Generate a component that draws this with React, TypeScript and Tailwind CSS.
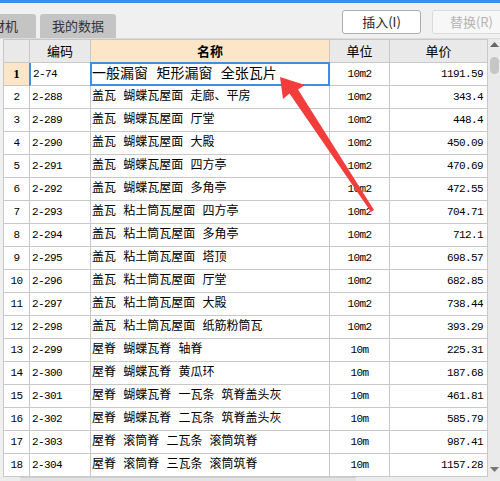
import React from "react";

const rows: [string, string, string, string][] = [
  ["2-74", "一般漏窗 矩形漏窗 全张瓦片", "10m2", "1191.59"],
  ["2-288", "盖瓦 蝴蝶瓦屋面 走廊、平房", "10m2", "343.4"],
  ["2-289", "盖瓦 蝴蝶瓦屋面 厅堂", "10m2", "448.4"],
  ["2-290", "盖瓦 蝴蝶瓦屋面 大殿", "10m2", "450.09"],
  ["2-291", "盖瓦 蝴蝶瓦屋面 四方亭", "10m2", "470.69"],
  ["2-292", "盖瓦 蝴蝶瓦屋面 多角亭", "10m2", "472.55"],
  ["2-293", "盖瓦 粘土筒瓦屋面 四方亭", "10m2", "704.71"],
  ["2-294", "盖瓦 粘土筒瓦屋面 多角亭", "10m2", "712.1"],
  ["2-295", "盖瓦 粘土筒瓦屋面 塔顶", "10m2", "698.57"],
  ["2-296", "盖瓦 粘土筒瓦屋面 厅堂", "10m2", "682.85"],
  ["2-297", "盖瓦 粘土筒瓦屋面 大殿", "10m2", "738.44"],
  ["2-298", "盖瓦 粘土筒瓦屋面 纸筋粉筒瓦", "10m2", "393.29"],
  ["2-299", "屋脊 蝴蝶瓦脊 轴脊", "10m", "225.31"],
  ["2-300", "屋脊 蝴蝶瓦脊 黄瓜环", "10m", "187.68"],
  ["2-301", "屋脊 蝴蝶瓦脊 一瓦条 筑脊盖头灰", "10m", "461.81"],
  ["2-302", "屋脊 蝴蝶瓦脊 二瓦条 筑脊盖头灰", "10m", "585.79"],
  ["2-303", "屋脊 滚筒脊 二瓦条 滚筒筑脊", "10m", "987.41"],
  ["2-304", "屋脊 滚筒脊 三瓦条 滚筒筑脊", "10m", "1157.28"],
];

const cell = "border-r border-b border-[#c8c8c8] h-[23px] flex items-center overflow-hidden whitespace-pre";
const mono = "font-['Liberation_Mono','Noto_Sans_CJK_SC',monospace] text-[11px] tracking-[-0.6px] text-black";
const cjk = "font-['Liberation_Mono','Noto_Sans_CJK_SC',monospace] text-[12px] text-black";

export default function App() {
  return (
    <div className="relative w-[500px] h-[481px] overflow-hidden bg-[#f0f0f0] font-['Noto_Sans_CJK_SC',sans-serif]">
      <div className="h-[3px] bg-[#3d8ee6]" />
      {/* toolbar */}
      <div className="h-[36px] flex justify-between border-b border-[#dcdcdc]">
        <div className="flex items-end gap-[4px]">
          <div className="ml-[-26px] h-[24px] px-[18px] flex items-center bg-[#c4c4c4] rounded-t-[3px] text-[13px] text-[#333]">
            材机
          </div>
          <div className="h-[24px] px-[12px] flex items-center bg-[#c4c4c4] rounded-t-[3px] text-[13px] text-[#333]">
            我的数据
          </div>
        </div>
        <div className="flex gap-[11px] pt-[7px] mr-[-11px]">
          <div className="w-[79px] h-[24px] flex items-center justify-center bg-white border border-[#adadad] rounded-[3px] text-[13px] text-[#222]">
            插入(I)
          </div>
          <div className="w-[79px] h-[24px] flex items-center justify-center bg-[#f7f7f7] border border-[#dadada] rounded-[3px] text-[13px] text-[#b4b4b4]">
            替换(R)
          </div>
        </div>
      </div>
      {/* table area */}
      <div className="flex">
        <div className="w-[3px]" />
        <div className="border-l border-t border-[#c8c8c8] bg-white">
          <div className="grid grid-cols-[26px_61px_239px_60px_98px] bg-[#e9e9e9] text-[13px] text-black">
            <div className={cell} />
            <div className={cell + " justify-center"}>编码</div>
            <div className={cell + " justify-center bg-[#fde6c8] font-bold"}>名称</div>
            <div className={cell + " justify-center"}>单位</div>
            <div className={cell + " justify-center"}>单价</div>
          </div>
          {rows.map((r, i) => {
            const sel = i === 0;
            return (
              <div key={i} className="grid grid-cols-[26px_61px_239px_60px_98px] bg-white">
                <div
                  className={
                    cell +
                    " justify-center " +
                    (sel
                      ? "bg-[#fde6c8] font-['Liberation_Serif',serif] font-bold text-[13px] text-black"
                      : mono)
                  }
                >
                  {i + 1}
                </div>
                <div className={cell + " pl-[2px] " + mono + (sel ? " border-l-[2px] border-l-[#3d8ee6] -ml-[1px] pl-[1px]" : "")}>
                  {r[0]}
                </div>
                {sel ? (
                  <div className="flex items-center overflow-hidden whitespace-pre -ml-[1px] -mt-[1px] h-[24px] border-[2px] border-[#3d8ee6] text-[14px] text-black font-['Liberation_Mono','Noto_Sans_CJK_SC',monospace]">
                    {r[1]}
                  </div>
                ) : (
                  <div className={cell + " pl-[1px] " + cjk}>{r[1]}</div>
                )}
                <div className={cell + " justify-center " + mono}>{r[2]}</div>
                <div className={cell + " justify-end pr-[4px] " + mono}>{r[3]}</div>
              </div>
            );
          })}
        </div>
        {/* vertical scrollbar */}
        <div className="w-[12px] h-[438px] bg-[#eaeaea] flex flex-col items-center">
          <svg width="9" height="6" viewBox="0 0 9 6" className="mt-[3px]">
            <polygon points="4.5,0 9,5 0,5" fill="#666" />
          </svg>
          <div className="mt-[9px] w-[9px] h-[17px] rounded-[5px] bg-[#c6c6c6]" />
          <div className="flex-1" />
          <svg width="9" height="6" viewBox="0 0 9 6" className="mb-[5px]">
            <polygon points="0,1 9,1 4.5,6" fill="#777" />
          </svg>
        </div>
      </div>
      {/* horizontal scrollbar */}
      <div className="flex h-[6px] bg-[#ececec] pl-[20px]">
        <div className="w-[336px] h-[6px] border-t border-[#cfcfcf] bg-[#e2e2e2]" />
      </div>
      {/* red arrow annotation */}
      <svg className="absolute left-0 top-0 pointer-events-none" width="500" height="481" viewBox="0 0 500 481">
        <polygon
          points="280,77 305,85 298,89.5 374,210 371,212 289.5,93.5 283,99"
          fill="#f23d3d"
        />
      </svg>
    </div>
  );
}
